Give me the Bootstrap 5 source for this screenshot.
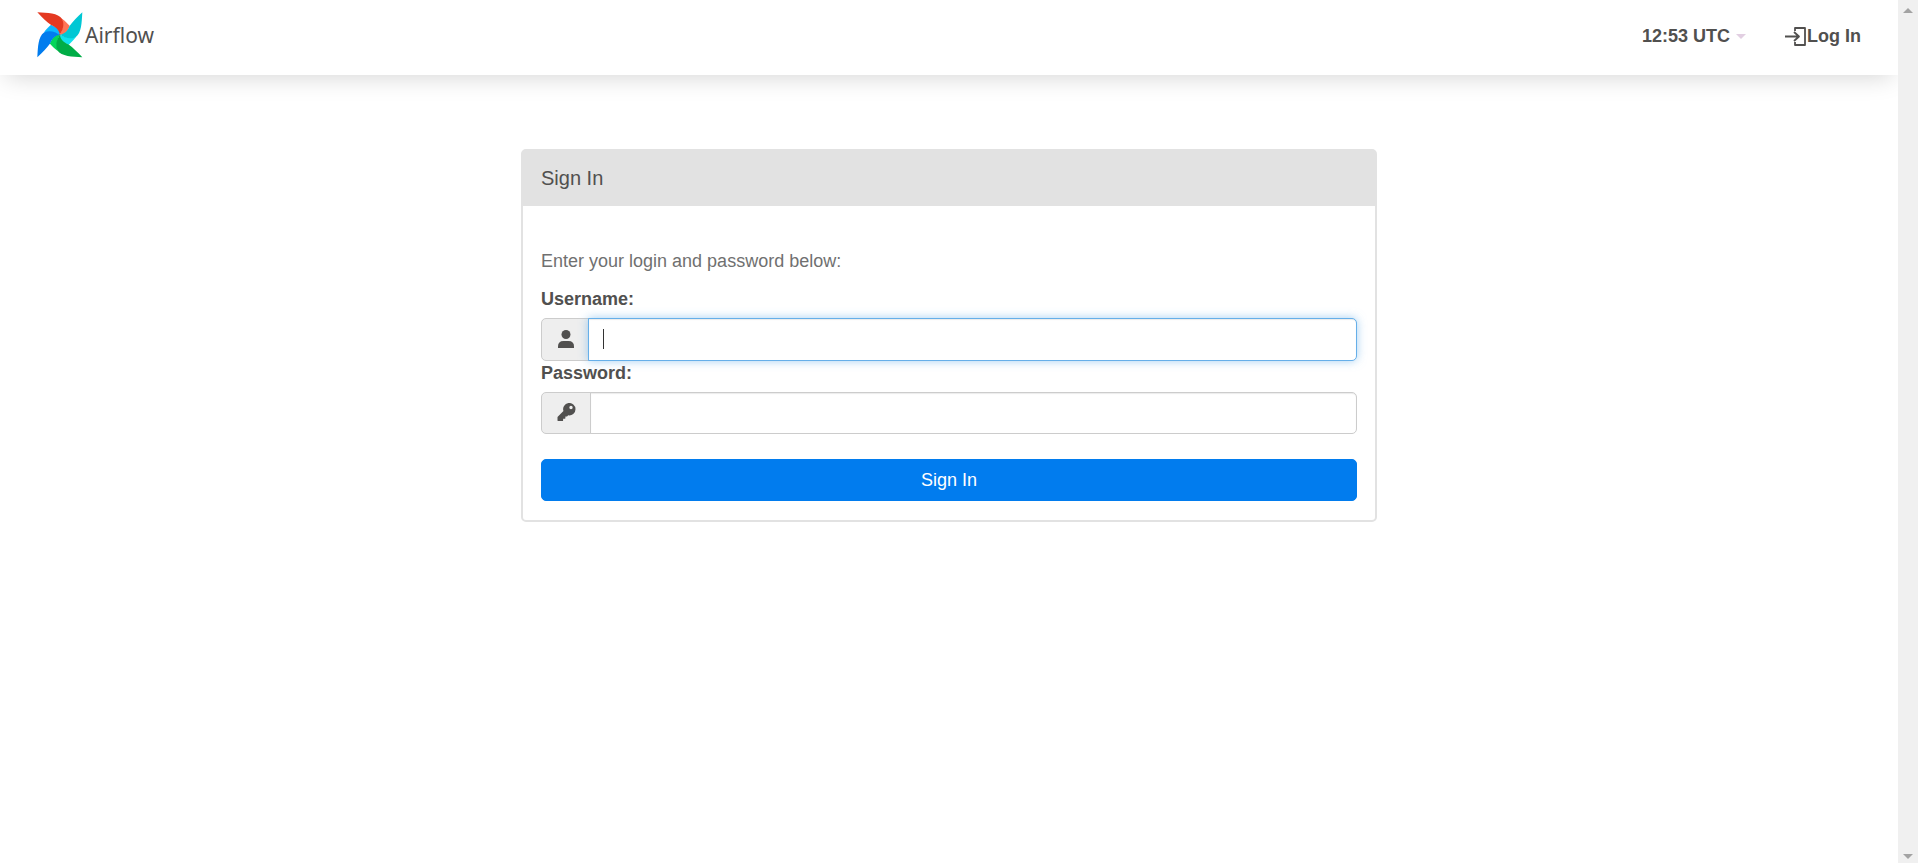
<!DOCTYPE html>
<html lang="en">
<head>
<meta charset="utf-8">
<meta name="viewport" content="width=device-width, initial-scale=1">
<title>Sign In - Airflow</title>
<link href="https://cdn.jsdelivr.net/npm/bootstrap@5.3.0/dist/css/bootstrap.min.css" rel="stylesheet">
<style>
body { font-family: "Liberation Sans", Arial, sans-serif; font-size: 18px; line-height: 25px; color: #51504f; background: #fff; }
.page { overflow-x: hidden; }
.topbar { padding: 0 37px 2px 37px; min-height: 75px; background: #fff; box-shadow: 0 8px 24px -6px rgba(0,0,0,.17); }
.topbar a, .clock { color: #51504f; font-weight: 700; text-decoration: none; }
.topbar .brand { font: 400 21px/28px "Noto Sans", sans-serif; gap: 2px; padding-bottom: 4px; }
.clock { border: 0; background: none; padding: 0; gap: 6px; }
.tri { width: 0; height: 0; border: 5px solid transparent; border-bottom-width: 0; border-top-color: #e2cfe2; }
.right-links { gap: 39px; }
.signin { width: 100%; max-width: 856px; margin-top: 74px; border: 2px solid #e2e2e2; border-radius: 5px; }
.signin .card-header { background: #e2e2e2; border: 0; padding: 14px 18px; font-size: 20px; line-height: 27px; border-radius: 0; color: #51504f; }
.signin .card-body { padding: 43px 18px 19px; color: #51504f; }
.hint { color: #707070; margin-bottom: 13px; }
.field-label { display: block; font-weight: 700; margin-bottom: 6px; }
.signin .input-group-text { width: 50px; justify-content: center; background: #eee; border-color: #ccc; border-radius: 5px; padding: 0 0 2px; color: #51504f; }
.signin .form-control { height: 42px; border-color: #ccc; border-radius: 0 5px 5px 0 !important; font-size: 18px; padding: 8px 15px; box-shadow: inset 0 1px 1px rgba(0,0,0,.08); caret-color: transparent; }
.signin .active-field { margin-left: -3px !important; height: 43px; border-color: #66afe9; box-shadow: inset 0 1px 1px rgba(0,0,0,.08), 0 0 10px rgba(102,175,233,.6); position: relative; z-index: 5; }
.text-cursor { position: absolute; z-index: 6; left: 63px; top: 11px; width: 1px; height: 20px; background: #333; }
.btn-signin { margin-top: 25px; height: 42px; padding: 0; background: #017cee; border-color: #017cee; color: #fff; border-radius: 5px; font-size: 18px; }
.scroll-track { width: 20px; background: #f0f0f0; padding: 8px 0 4px; }
.scroll-track svg { display: block; }
</style>
</head>
<body>
<div class="d-flex min-vh-100">
  <div class="page flex-grow-1">
    <header class="topbar d-flex align-items-center justify-content-between">
      <a class="brand d-flex align-items-center" href="#">
        <svg width="46" height="46" viewBox="-1 -1 137 137" aria-hidden="true">
          <defs>
            <path id="blade" d="M0 0C30 2 62 2 74 20C82 38 75 54 67 67C65 56 60 46 41 38C28 29 14 15 0 0Z"/>
            <path id="fold" d="M67 67C76 49 78 36 73 19C82 25 90 33 97 41L88 58L76 67Z"/>
          </defs>
          <g fill="#ff7557"><use href="#fold"/></g>
          <g fill="#11e1ee" transform="rotate(90 67 67)"><use href="#fold"/></g>
          <g fill="#04d659" transform="rotate(180 67 67)"><use href="#fold"/></g>
          <g fill="#0cb6ff" transform="rotate(270 67 67)"><use href="#fold"/></g>
          <g fill="#00c7d4" transform="rotate(90 67 67)"><use href="#blade"/></g>
          <g fill="#00ad46" transform="rotate(180 67 67)"><use href="#blade"/></g>
          <g fill="#017cee" transform="rotate(270 67 67)"><use href="#blade"/></g>
          <g fill="#e43921"><use href="#blade"/></g>
          <circle cx="67" cy="67" r="2" fill="#51504f"/>
        </svg>
        <span>Airflow</span>
      </a>
      <nav class="right-links d-flex align-items-center">
        <button type="button" class="clock d-flex align-items-center">12:53 UTC <span class="tri"></span></button>
        <a href="#" class="d-flex align-items-center">
          <svg width="22" height="22" viewBox="0 0 22 22" fill="none" stroke="#51504f" stroke-width="1.8" stroke-linejoin="round" aria-hidden="true"><path d="M10 5V2H20V19H10V16M0 10.500H14M9 6L14 10.500L9 15"/></svg>
          <span>Log In</span>
        </a>
      </nav>
    </header>
    <main class="d-flex justify-content-center">
      <section class="card signin">
        <div class="card-header">Sign In</div>
        <form class="card-body">
          <p class="hint">Enter your login and password below:</p>
          <label class="field-label" for="username">Username:</label>
          <div class="input-group">
            <span class="input-group-text"><svg width="16" height="18" viewBox="0 0 16 18" fill="currentColor" aria-hidden="true"><circle cx="8" cy="4.5" r="4.5"/><path d="M0 18V16.500Q0 11 5.500 11H10.500Q16 11 16 16.500V18Z"/></svg></span>
            <input class="form-control active-field" id="username" type="text">
            <span class="text-cursor"></span>
          </div>
          <label class="field-label" for="password">Password:</label>
          <div class="input-group">
            <span class="input-group-text"><svg width="19" height="18" viewBox="0 0 512 512" fill="currentColor" aria-hidden="true"><path d="M512 176a176 176 0 0 1-209 173l-24 27a24 24 0 0 1-18 8h-37v40a24 24 0 0 1-24 24h-40v40a24 24 0 0 1-24 24H24a24 24 0 0 1-24-24v-78a24 24 0 0 1 7-17l162-162A176 176 0 1 1 512 176ZM336 128a48 48 0 1 0 96 0 48 48 0 1 0-96 0Z"/></svg></span>
            <input class="form-control" id="password" type="password">
          </div>
          <button class="btn btn-signin w-100" type="submit">Sign In</button>
        </form>
      </section>
    </main>
  </div>
  <div class="scroll-track flex-shrink-0 d-flex flex-column align-items-center justify-content-between" aria-hidden="true">
    <svg width="10" height="5" viewBox="0 0 10 5" fill="#a3a3a3"><path d="M0 5L5 0L10 5Z"/></svg>
    <svg width="10" height="5" viewBox="0 0 10 5" fill="#a3a3a3"><path d="M0 0L5 5L10 0Z"/></svg>
  </div>
</div>
<script src="https://cdn.jsdelivr.net/npm/bootstrap@5.3.0/dist/js/bootstrap.bundle.min.js"></script>
</body>
</html>
